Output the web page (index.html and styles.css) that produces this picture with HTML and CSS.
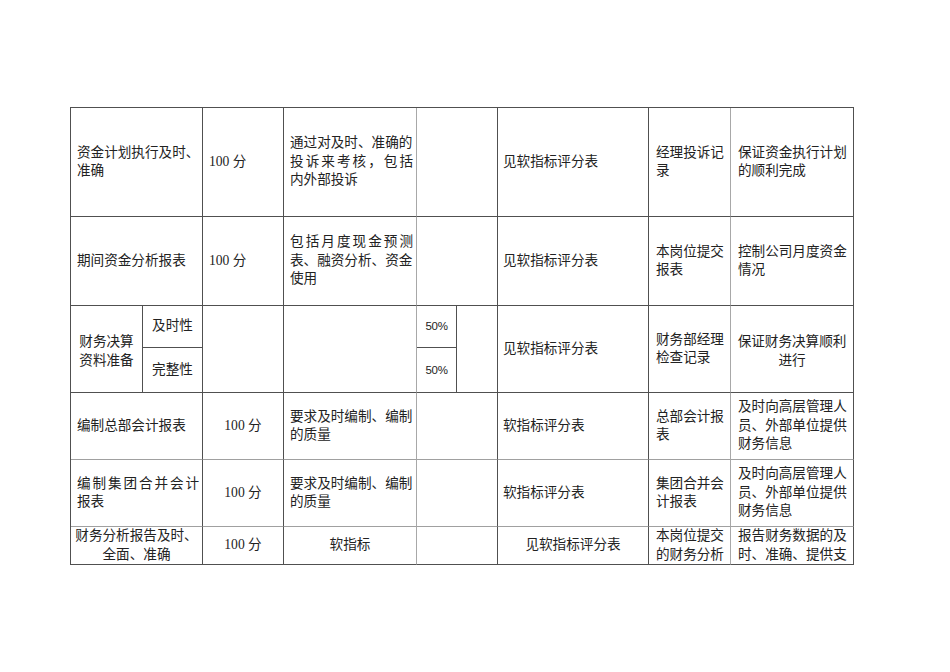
FILE: index.html
```html
<!DOCTYPE html>
<html lang="zh-CN">
<head>
<meta charset="utf-8">
<title>考核表</title>
<link rel="stylesheet" href="styles.css">
</head>
<body>
<div class="tbl">
  <!-- row 1 -->
  <div class="cell s2"><div>资金计划执行及时、</div><div>准确</div></div>
  <div class="cell"><div>100 分</div></div>
  <div class="cell gv"><div>通过对及时、准确的</div><div class="j">投诉来考核，包括</div><div>内外部投诉</div></div>
  <div class="cell s2"></div>
  <div class="cell p5"><div>见软指标评分表</div></div>
  <div class="cell p7 gv"><div>经理投诉记</div><div>录</div></div>
  <div class="cell p7"><div>保证资金执行计划</div><div>的顺利完成</div></div>

  <!-- row 2 -->
  <div class="cell s2"><div>期间资金分析报表</div></div>
  <div class="cell"><div>100 分</div></div>
  <div class="cell gv"><div class="j">包括月度现金预测</div><div>表、融资分析、资金</div><div>使用</div></div>
  <div class="cell s2"></div>
  <div class="cell p5"><div>见软指标评分表</div></div>
  <div class="cell p7 gv"><div>本岗位提交</div><div>报表</div></div>
  <div class="cell p7"><div>控制公司月度资金</div><div>情况</div></div>

  <!-- row 3 -->
  <div class="cell r2 ctr low"><div>财务决算</div><div>资料准备</div></div>
  <div class="cell ctr"><div>及时性</div></div>
  <div class="cell r2"></div>
  <div class="cell r2 gv"></div>
  <div class="cell ctr pct"><div>50%</div></div>
  <div class="cell r2"></div>
  <div class="cell r2 p5"><div>见软指标评分表</div></div>
  <div class="cell r2 p7 gv"><div>财务部经理</div><div>检查记录</div></div>
  <div class="cell r2 ctr low"><div>保证财务决算顺利</div><div>进行</div></div>
  <div class="cell ctr"><div>完整性</div></div>
  <div class="cell ctr pct"><div>50%</div></div>

  <!-- row 4 -->
  <div class="cell s2 gh"><div>编制总部会计报表</div></div>
  <div class="cell ctr gh"><div>100 分</div></div>
  <div class="cell gv gh"><div>要求及时编制、编制</div><div>的质量</div></div>
  <div class="cell s2 gh"></div>
  <div class="cell p5 gh"><div>软指标评分表</div></div>
  <div class="cell p7 gv gh"><div>总部会计报</div><div>表</div></div>
  <div class="cell p7 gh"><div>及时向高层管理人</div><div>员、外部单位提供</div><div>财务信息</div></div>

  <!-- row 5 -->
  <div class="cell s2 gh"><div class="j">编制集团合并会计</div><div>报表</div></div>
  <div class="cell ctr gh"><div>100 分</div></div>
  <div class="cell gv gh"><div>要求及时编制、编制</div><div>的质量</div></div>
  <div class="cell s2 gh"></div>
  <div class="cell p5 gh"><div>软指标评分表</div></div>
  <div class="cell p7 gv gh"><div>集团合并会</div><div>计报表</div></div>
  <div class="cell p7 gh"><div>及时向高层管理人</div><div>员、外部单位提供</div><div>财务信息</div></div>

  <!-- row 6 -->
  <div class="cell s2 ctr"><div>财务分析报告及时、</div><div>全面、准确</div></div>
  <div class="cell ctr"><div>100 分</div></div>
  <div class="cell ctr gv"><div>软指标</div></div>
  <div class="cell s2"></div>
  <div class="cell ctr"><div>见软指标评分表</div></div>
  <div class="cell p7 gv top"><div>本岗位提交</div><div>的财务分析</div></div>
  <div class="cell p7 top"><div>报告财务数据的及</div><div>时、准确、提供支</div></div>
</div>
</body>
</html>
```

FILE: styles.css
```css
html, body {
  margin: 0;
  padding: 0;
  background: #ffffff;
}

body {
  font-family: "Liberation Serif", "Noto Sans CJK SC", serif;
  font-size: 13.6px;
  color: #222222;
}

.tbl {
  margin: 107px 0 0 70px;
  display: grid;
  width: max-content;
  grid-template-columns: 72px 60px 81px 133px 40px 41px 151px 82px 123px;
  grid-template-rows: 109px 89px 42px 45px 67px 67px 38px;
  border-top: 1px solid #505050;
  border-left: 1px solid #505050;
}

.cell {
  box-sizing: border-box;
  border-right: 1px solid #505050;
  border-bottom: 1px solid #505050;
  display: flex;
  flex-direction: column;
  justify-content: center;
  padding: 0 3px 0 6px;
  line-height: 18.5px;
  overflow: hidden;
  white-space: nowrap;
}

.s2 { grid-column: span 2; }
.r2 { grid-row: span 2; }

.ctr {
  padding: 0;
  text-align: center;
}

.low { padding-top: 5px; }

.p5 { padding-left: 5px; }
.p7 { padding-left: 7px; }

.gv { border-right-color: #a8a8a8; }
.gh { border-bottom-color: #a0a0a0; }

.top { justify-content: flex-start; }

.j {
  text-align: justify;
  text-align-last: justify;
}

.pct {
  font-family: "Liberation Sans", "Noto Sans CJK SC", sans-serif;
  font-size: 11.5px;
  letter-spacing: -0.3px;
}
```
